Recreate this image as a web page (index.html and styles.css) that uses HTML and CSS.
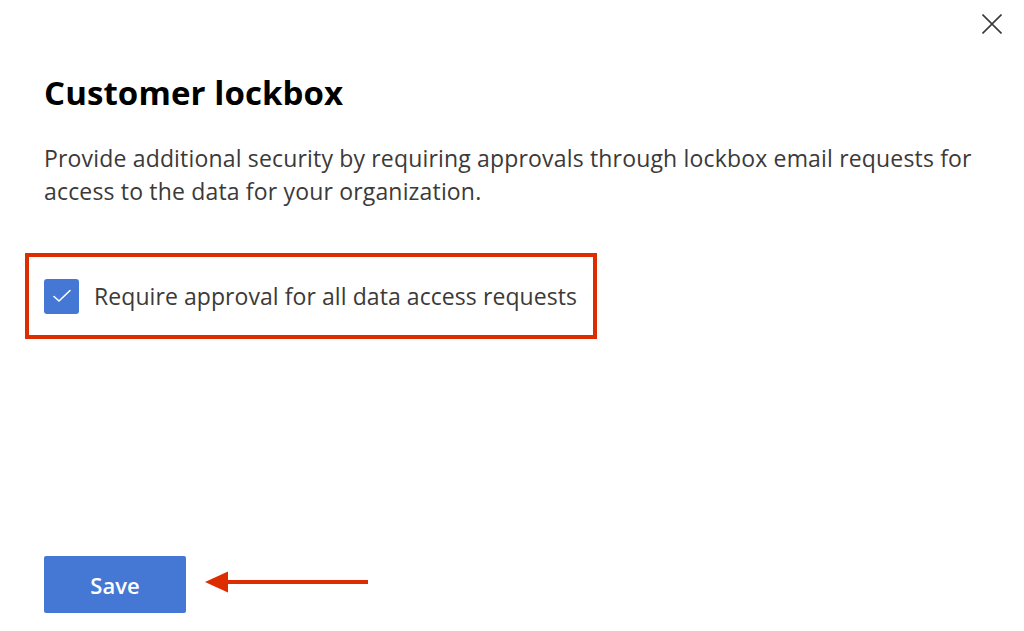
FILE: index.html
```html
<!DOCTYPE html>
<html lang="en">
<head>
<meta charset="utf-8">
<title>Customer lockbox</title>
<link rel="stylesheet" href="styles.css">
</head>
<body>
<div class="panel">
  <div class="topbar">
    <button class="close" aria-label="Close">
      <svg width="20" height="20" viewBox="0 0 20 20"><path d="M0.5 0.5 L19.5 19.5 M19.5 0.5 L0.5 19.5" stroke="#3a3a3a" stroke-width="1.6" fill="none"/></svg>
    </button>
  </div>
  <h1 class="title">Customer lockbox</h1>
  <p class="desc">Provide additional security by requiring approvals through lockbox email requests for access to the data for your organization.</p>
  <div class="highlight">
    <label class="check">
      <span class="box">
        <svg width="20" height="14" viewBox="0 0 20 14"><path d="M2 7.5 L7 12 L18 1.5" stroke="#fff" stroke-width="1.6" fill="none" stroke-linecap="round" stroke-linejoin="round"/></svg>
      </span>
      <span class="label">Require approval for all data access requests</span>
    </label>
  </div>
  <div class="spacer"></div>
  <div class="actions">
    <button class="save">Save</button>
    <svg class="arrow" width="164" height="24" viewBox="0 0 164 24"><path d="M0 12 L23 1.5 L23 22.5 Z" fill="#dd2c00"/><rect x="20" y="10" width="143" height="4" fill="#dd2c00"/></svg>
  </div>
</div>
</body>
</html>
```
FILE: styles.css
```css
* { box-sizing: border-box; }
html, body { margin: 0; padding: 0; background: #fff; }
body { font-family: "Open Sans", "Noto Sans", sans-serif; color: #323130; }
.panel { width: 1024px; height: 631px; padding: 0 0 0 44px; display: flex; flex-direction: column; }
.topbar { display: flex; justify-content: flex-end; padding: 14px 22px 0 0; height: 34px; }
.close { border: 0; background: none; padding: 0; width: 20px; height: 20px; cursor: pointer; }
.close svg { display: block; }
.title { margin: 37px 0 0 0; font-size: 33px; font-weight: 700; color: #000; line-height: 44px; letter-spacing: 0.1px; }
.desc { margin: 27px 0 0 0; font-size: 23px; line-height: 33px; width: 950px; color: #3b3a39; letter-spacing: 0.17px; }
.highlight { margin: 45px 0 0 -19px; width: 572px; height: 86px; border: 4px solid #dd2c00; display: flex; align-items: center; padding-left: 15px; }
.check { display: flex; align-items: center; gap: 15px; }
.box { width: 35px; height: 35px; background: #4478d4; border-radius: 3px; display: flex; align-items: center; justify-content: center; }
.box svg { display: block; }
.label { font-size: 23px; color: #3b3a39; line-height: 30px; letter-spacing: 0.07px; }
.spacer { flex: 1; }
.actions { display: flex; align-items: center; gap: 19px; margin-bottom: 18px; }
.save { width: 142px; height: 57px; background: #4478d4; color: #fff; border: 0; border-radius: 2px; font-family: "Open Sans", "Noto Sans", sans-serif; font-size: 22px; font-weight: 600; }
.arrow { display: block; margin-top: -6px; }
```
